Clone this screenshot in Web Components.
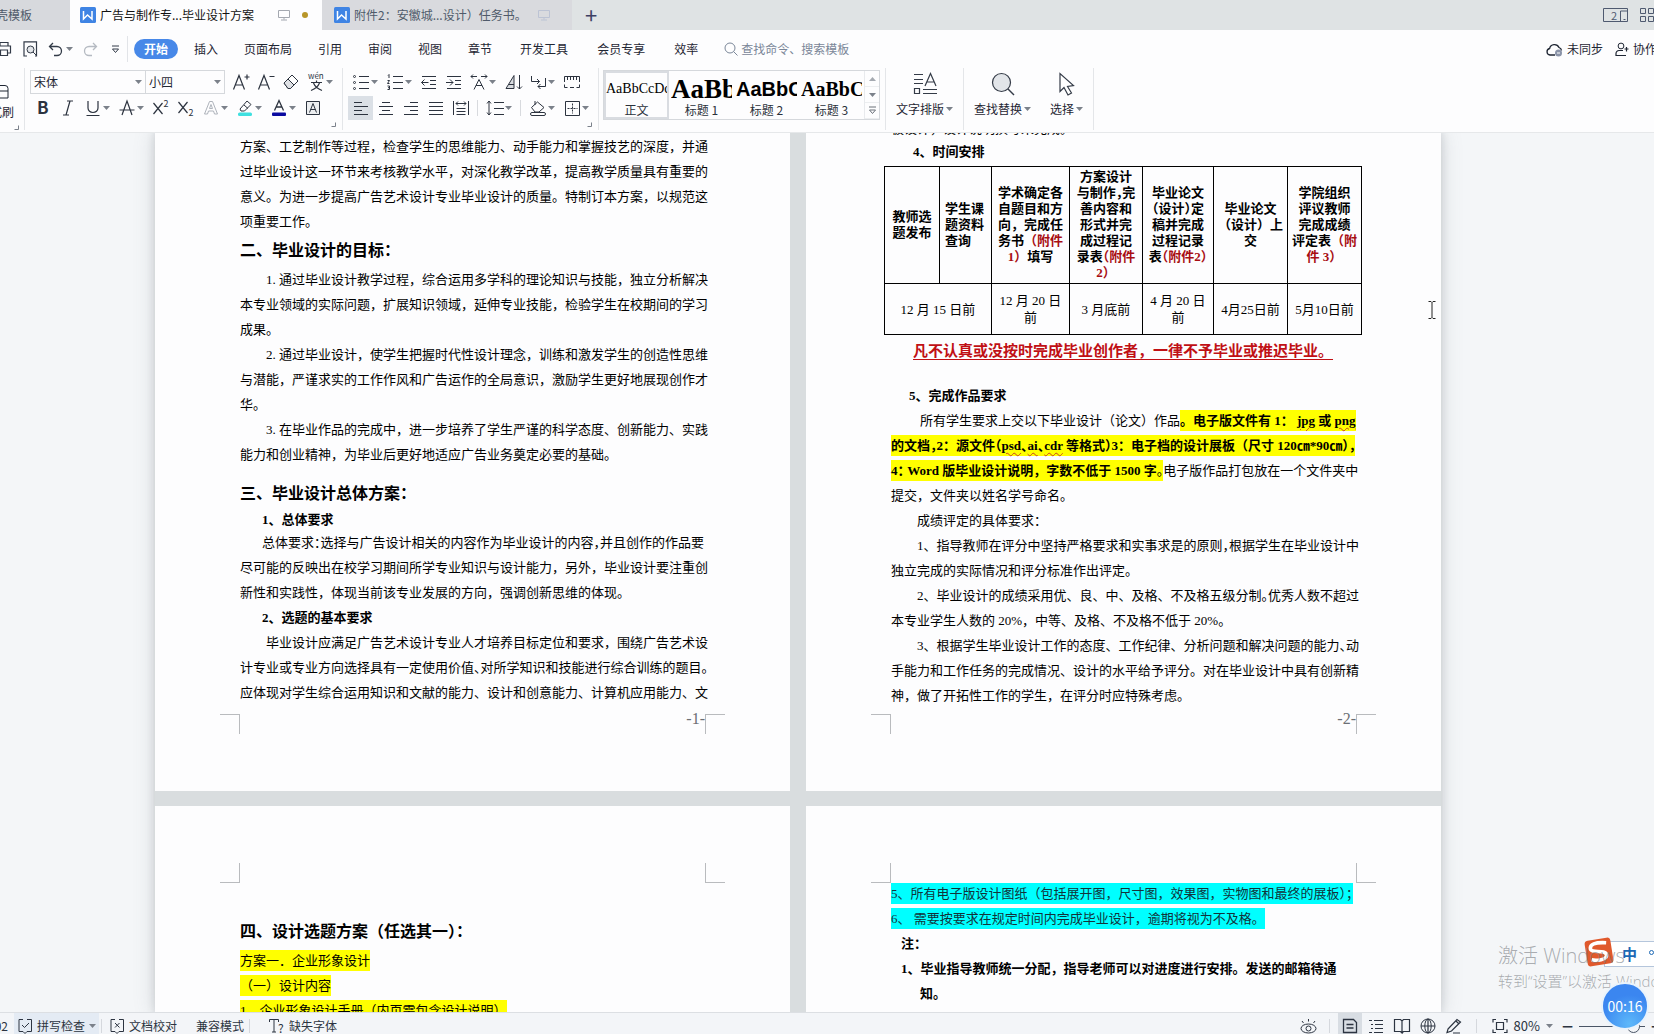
<!DOCTYPE html>
<html lang="zh-CN">
<head>
<meta charset="utf-8">
<title>毕业设计方案</title>
<style>
html,body{margin:0;height:100%;overflow:hidden}
body{font:12px/18px "Noto Sans CJK SC",sans-serif;color:#1f2633;background:#fdfdfe}
</style>
</head>
<body>
<writer-app></writer-app>
<script>
const define = (name, css, html, setup) => {
  const tpl = document.createElement('template');
  tpl.innerHTML = `<style>*{box-sizing:border-box}button,input,select{font:inherit;color:inherit;margin:0;padding:0;border:0;background:none;outline:0}a{color:inherit;text-decoration:none}${css}</style>${html}`;
  customElements.define(name, class extends HTMLElement {
    connectedCallback() {
      if (this.shadowRoot) return;
      this.attachShadow({mode: 'open'}).append(tpl.content.cloneNode(true));
      if (setup) setup(this, this.shadowRoot);
    }
  });
};

/* ---------- icons ---------- */
const T = (x, y, s, t, extra = '') => `<text x="${x}" y="${y}" font-size="${s}" fill="currentColor" stroke="none" ${extra}>${t}</text>`;
const ICONS = {
  writer: [16, 16, '<rect width="16" height="16" rx="1.5" fill="#3f84e4" stroke="none"/><path d="M3.5 4v8l4-4 4.500 4V4" stroke="#fff" stroke-width="1.500"/>'],
  monitor: [12, 12, '<path d="M.5 1.500h11v7H.5zM6 8.500v2M3 11h6"/>'],
  screens: [25, 15, '<path d="M.5.5h24v13H.5zM17.500 13V3h6.500M20.500 11.500h2"/>' + T(8, 11.5, 11, '2')],
  grid: [18, 15, '<path d="M.5.5h5v5h-5zM8.500.5h5v5h-5zM.5 8.500h5v5h-5zM8.500 8.500h5v5h-5z"/>'],
  printer: [16, 16, '<path d="M4 5V1.500h8V5M4 12H1.500V5h13v7H12M4.500 9h7v5.500h-7z" stroke-width="1.200"/>'],
  preview: [16, 16, '<path d="M5 15H2V.8h12.500V15H13" stroke-width="1.200"/><circle cx="8.500" cy="8.500" r="3.500" fill="#e2e5e9"/><path d="M11 11l4 4"/>'],
  undo: [15, 15, '<path d="M5 1L1.500 4.500 5 8M1.500 4.500H9a4.500 4.500 0 010 9H6" stroke-width="1.300"/>'],
  redo: [15, 15, '<path d="M10 1l3.500 3.500L10 8M13.500 4.500H6a4.500 4.500 0 000 9h3" stroke-width="1.300"/>'],
  more: [9, 9, '<path d="M1 1h7M1.500 4l3 3.500 3-3.500z"/>'],
  search: [14, 14, '<circle cx="6" cy="6" r="5"/><path d="M9.500 9.500l4 4"/>'],
  cloud: [17, 15, '<path d="M9 13H4a3.300 3.300 0 01-.4-6.500A5 5 0 0113 5.500a3.500 3.500 0 012.500 3" stroke-width="1.300"/><circle cx="12.500" cy="11" r="3.500" fill="#8a93a8" stroke="none"/><path d="M11 11h3" stroke="#fff"/>'],
  person: [14, 15, '<circle cx="6" cy="4" r="2.900"/><path d="M8 8.500H4a3 3 0 00-3 3v2h10M9.500 7h4M11.500 5v4.500" stroke-width="1.200"/>'],
  brush: [10, 20, '<path d="M-4 5.500h10q3 0 3 3V18H-4M-2 11h11"/>'],
  grow: [18, 18, '<path d="M1.500 16.500L7 2.500l5.500 14M3.500 12h7M12.500 4h5M15 1.500v5" stroke-width="1.200"/>'],
  shrink: [18, 18, '<path d="M1.500 16.500L7 2.500l5.500 14M3.500 12h7M12.500 3.500h5" stroke-width="1.200"/>'],
  eraser: [18, 18, '<path d="M2 10l8-8 6 6-7.500 7.500H6z" fill="#fff"/><path d="M6 6l6 6-3.500 3.500H6L2 10z" fill="#dfe1e5"/>'],
  wen: [18, 18, T(1, 6, 8, 'wén') + '<path d="M4 9.500h11M9.500 7.500v2M12.500 10Q10.500 15 4 17.500M6.500 10Q8.500 15 15 17.500" stroke-width="1.200"/>'],
  bold: [18, 18, T(3, 15, 17, 'B', 'font-weight="700" font-family="Noto Sans CJK SC"')],
  italic: [18, 18, '<path d="M8 2h6M4 16h6M11 2L7 16" stroke-width="1.200"/>'],
  under: [18, 18, '<path d="M4 2v7a5 4.500 0 0010 0V2M2.500 16.500h13" stroke-width="1.200"/>'],
  strike: [18, 18, '<path d="M4 16l5-14 5 14M1.500 11h15" stroke-width="1.200"/>'],
  sup: [18, 18, '<path d="M1.500 4l9 11M10.500 4l-9 11" stroke-width="1.200"/>' + T(11.5, 8, 9, '2')],
  sub: [18, 18, '<path d="M1.500 3l9 11M10.500 3l-9 11" stroke-width="1.200"/>' + T(11.5, 17, 9, '2')],
  fx: [18, 18, '<path d="M2.500 15L7.500 2.500h3L15.500 15h-3l-1-3h-5l-1 3zM7.500 9.500h3L9 5.500z" stroke="#aeb3bb"/>'],
  marker: [18, 18, '<path d="M4 10l7-8 4 3.500L8.500 12H5zM8 6l4 3.500"/><rect x="2" y="13.500" width="14" height="3.500" rx="1.500" fill="#3fe0e0" stroke="none"/>'],
  color: [18, 18, '<path d="M4.500 11.500L9 1.500l4.500 10M6 8h6" stroke-width="1.300"/><rect x="2" y="13.500" width="14" height="3.500" rx="1" fill="#0a0aa0" stroke="none"/>'],
  boxed: [18, 18, '<path d="M2.500 2.500h13v13h-13z" fill="#eceef0"/><path d="M5.500 13.500L9 4.500l3.500 9M6.500 10.500h5"/>'],
  bullets: [18, 18, '<path d="M7 3.500h10M7 9.500h10M7 15.500h10"/><circle cx="2.500" cy="3.500" r="1"/><circle cx="2.500" cy="9.500" r="1"/><circle cx="2.500" cy="15.500" r="1"/>'],
  numbers: [18, 18, '<path d="M7 3.500h10M7 9.500h10M7 15.500h10M2 2.500l1-1V5M1.500 7.500h2L1.500 10.500h2M1.500 13h2v3.500h-2M2 14.700h1.500"/>'],
  outdent: [18, 18, '<path d="M2 3.500h14M10 7.500h6M10 11.500h6M2 15.500h14M1.500 9.500h7M4.500 6.500l-3 3 3 3"/>'],
  indent: [18, 18, '<path d="M2 3.500h14M10 7.500h6M10 11.500h6M2 15.500h14M1 9.500h7M5 6.500l3 3-3 3"/>'],
  spread: [18, 18, '<path d="M4 16.500L9 6.500l5 10M6 12.500h6M1 3.500h6M3 1.500l-2 2 2 2M11 3.500h6M15 1.500l2 2-2 2"/>'],
  sort: [18, 18, '<path d="M2 15.500L10 2.500v13z" fill="#d9dce0"/><path d="M5 11.500h5M15.500 2v14M13 13.500l2.500 2.500 2.500-2.500"/>'],
  ret: [18, 18, '<path d="M2.500 3v5.500h8M8 6l2.500 2.500L8 11M16.500 5v8.500H9M11.500 11L9 13.500l2.500 2.500"/>'],
  ruler: [18, 18, '<path d="M1.500 9V3.500h15V9M4.500 3.500V7M7.500 3.500V7M10.500 3.500V7M13.500 3.500V7M1.500 11.500v3h3M7 14.500h4M13.500 14.500h3v-3"/>'],
  left: [18, 18, '<path d="M2 3.500h8M2 7.500h14M2 11.500h8M2 15.500h14" stroke-width="1.200"/>'],
  center: [18, 18, '<path d="M5 3.500h8M2 7.500h14M5 11.500h8M2 15.500h14"/>'],
  right: [18, 18, '<path d="M8 3.500h8M2 7.500h14M8 11.500h8M2 15.500h14"/>'],
  justify: [18, 18, '<path d="M2 3.500h14M2 7.500h14M2 11.500h14M2 15.500h14"/>'],
  distribute: [18, 18, '<path d="M1.500 2v14M16.500 2v14M4 4.500h10M6 2.500l-2 2 2 2M12 2.500l2 2-2 2M4.500 9.500h9M4.500 15.500h9M4.500 12.500h9"/>'],
  spacing: [18, 18, '<path d="M8 3.500h10M8 9.500h10M8 15.500h10M3 2v14M1 4.500l2-2.500 2 2.500M1 13.500L3 16l2-2.500"/>'],
  bucket: [18, 18, '<path d="M2.500 8.500L8.500 3l6.500 5.500L10 13H6zM6 2v4"/><rect x="1.500" y="13.500" width="15" height="3" rx="1.500" fill="#fff"/>'],
  borders: [18, 18, '<path d="M2.500 2.500h14v14h-14z"/><path d="M9.500 4.500v10M4.500 9.500h10" stroke-dasharray="2 1"/>'],
  typeset: [24, 24, '<path d="M1 2.500h9M1 7.500h9M1 11.500h9M1.500 16.500h5v5h-5zM10 17.500h14M10 21.500h14M12 14l5.500-12.500L23 14M14 10h7" stroke-width="1.200"/>'],
  find: [24, 24, '<circle cx="10.500" cy="10.500" r="9" fill="#e2e5e9" stroke-width="1.200"/><path d="M17 17l6 6" stroke-width="1.400"/>'],
  arrow: [24, 24, '<path d="M5 1.500v18l4-4 4 7.500 3.500-2-4-6.500 6-1z" fill="#fff" stroke-width="1.200"/>'],
  check: [16, 16, '<path d="M6 1.500H2v12h4l2 2 2-2h4.500v-12H10" /><path d="M5 7l2.500 2.500L12 5"/>'],
  proof: [16, 16, '<path d="M6 1.500H2v12h4l2 2 2-2h4.500v-12H10M6 5l4.500 4.500M10.500 5L6 9.500"/>'],
  tq: [16, 16, '<path d="M.5 4V1.500h9V4M5 1.500v12.500M3 14h4" />' + T(9, 15, 12, '?')],
  eye: [17, 17, '<ellipse cx="8.500" cy="10.500" rx="7.500" ry="4.500"/><circle cx="8.500" cy="10.500" r="2.500"/><path d="M8.500 3.500V1M3.500 5L2 3M13.500 5L15 3"/>'],
  page: [16, 16, '<path d="M1.500 1.500h10l3 3v10h-13zM4.500 6.500h7M4.500 10h7" stroke-width="1.300"/>'],
  list: [16, 16, '<path d="M1 2.500h3M6 2.500h9M3 6.500h2M7 6.500h8M3 10.500h2M7 10.500h8M1 14.500h3M6 14.500h9"/>'],
  book: [18, 16, '<path d="M9 3v12l-1.500-1.500H1.500v-12h6L9 3l1.500-1.500h6v12h-6L9 15" stroke-width="1.200"/>'],
  globe: [16, 16, '<circle cx="8" cy="8" r="7"/><ellipse cx="8" cy="8" rx="3.200" ry="7"/><path d="M1 8h14M8 1v14" stroke-width="1.200"/>'],
  pen: [18, 16, '<path d="M3 11L12 1.500l3.500 2.500-9 9-4.500 1.500zM11 3l3 3M8 15h7" stroke-width="1.200"/>'],
  full: [16, 16, '<path d="M1 4.500V1.500h3M12 1.500h3v3M15 11.500v3h-3M4 14.500H1v-3M4.500 4.500h7v7h-7z" stroke-width="1.200"/>'],
  launch: [5, 5, '<path d="M.5 4.500h4v-4"/>'],
  down: [7, 4, '<path d="M0 0h7L3.500 4z" fill="#7b818a" stroke="none"/>'],
  up: [7, 4, '<path d="M0 4h7L3.500 0z" fill="#a4a9b0" stroke="none"/>'],
  ibeam: [8, 18, '<path d="M.5.500h2.500l1 1 1-1H7.500M4 1.500v15M.5 17.500h2.500l1-1 1 1h2.500" stroke="#222"/>'],
  sogou: [32, 32, '<g transform="rotate(-9 16 16)"><rect x="3" y="3" width="26" height="26" rx="3.500" fill="#e0592c" stroke="none"/><path d="M24.500 8Q8 4.500 8 11.500c0 5 15 2.500 15 8.500 0 5-11 4.500-15.500 2.500" stroke="#fff" stroke-width="3.600"/></g>']
};
define('ui-icon', ':host{display:inline-flex;flex:none}svg{display:block;overflow:visible}', '', (el, root) => {
  const [w, h, body] = ICONS[el.getAttribute('name')];
  const box = document.createElement('div');
  box.innerHTML = `<svg width="${w}" height="${h}" viewBox="0 0 ${w} ${h}" fill="none" stroke="currentColor" stroke-width="1" aria-hidden="true">${body}</svg>`;
  root.append(box.firstChild);
});

/* ---------- tabs ---------- */
define('doc-tab', `
:host{display:flex;flex:none;width:250px;height:30px;background:#d9dade;color:#4f5a6a}
:host([active]){background:#fdfdfe;color:#111;width:252px}
:host([home]){width:70px;background:#d7d9dd}
a{display:flex;flex:1;align-items:center;gap:4px;padding-left:12px;min-width:0}
:host([active]) a{padding-left:10px}
.m{display:flex;color:#bcc3d4;margin-left:7px}
:host([active]) .m{margin-left:20px;color:#a4a8b0}
i{width:6px;height:6px;border-radius:3px;background:#b8962a;margin-left:8px}
:host([home]) a{padding:0;flex:none;width:32px;justify-content:flex-end;overflow:hidden;white-space:nowrap}
:host([home]) .x,:host(:not([active])) i{display:none}`,
`<a href="#"><ui-icon class="x" name="writer"></ui-icon><slot></slot><span class="m x"><ui-icon name="monitor"></ui-icon></span><i></i></a>`);

define('tab-bar', `
:host{display:flex;height:30px;background:#dfe3e4;overflow:hidden;color:#3d4663}
.new{width:38px;font-size:22px;line-height:26px;height:28px;color:#3d3f63}
.end{margin-left:auto;display:flex;align-items:center;gap:12px;margin-right:-4px;color:#4f5a70}
.end button{display:flex}`,
`<doc-tab home>稻壳模板</doc-tab><doc-tab active>广告与制作专...毕业设计方案</doc-tab><doc-tab>附件2：安徽城...设计）任务书。</doc-tab>
<button class="new" aria-label="新建标签">+</button>
<div class="end"><button aria-label="窗口"><ui-icon name="screens"></ui-icon></button><button aria-label="应用"><ui-icon name="grid"></ui-icon></button></div>`);

/* ---------- menu ---------- */
define('menu-bar', `
:host{display:flex;align-items:center;height:38px;overflow:hidden;white-space:nowrap}
button{display:flex;align-items:center}
.quick{display:flex;align-items:center;width:128px;height:26px;border-right:1px solid #e2e4e8;color:#333b48;gap:10px;flex:none}
.quick button:first-child{margin-left:-4px}
.quick .u{gap:3px}.dim{color:#b5bac2}
.quick .l{margin-left:3px}
nav{display:flex;align-items:center;gap:26px;flex:none}
nav.b{gap:29px;margin-left:28px}
.on{height:20px;line-height:20px;border-radius:10px;background:#4788e8;color:#fff;font-weight:700;padding:0 10px;margin:0 -10px 0 6px}
label{display:flex;align-items:center;gap:3px;margin-left:26px;color:#7a8698}
input{width:140px;line-height:18px}input::placeholder{color:#7a8698;opacity:1}
.end{margin-left:auto;display:flex;gap:12px;margin-right:-3px}
.end button{gap:4px}`,
`<div class="quick"><button aria-label="打印"><ui-icon name="printer"></ui-icon></button><button aria-label="打印预览"><ui-icon name="preview"></ui-icon></button><button class="u" aria-label="撤销"><ui-icon name="undo"></ui-icon><ui-icon name="down"></ui-icon></button><button class="dim" aria-label="恢复"><ui-icon name="redo"></ui-icon></button><button class="l" aria-label="更多"><ui-icon name="more"></ui-icon></button></div>
<nav><a class="on" href="#">开始</a><a href="#">插入</a><a href="#">页面布局</a><a href="#">引用</a><a href="#">审阅</a><a href="#">视图</a><a href="#">章节</a></nav>
<nav class="b"><a href="#">开发工具</a><a href="#">会员专享</a><a href="#">效率</a></nav>
<label><ui-icon name="search"></ui-icon><input placeholder="查找命令、搜索模板" aria-label="查找命令"></label>
<div class="end"><button><ui-icon name="cloud"></ui-icon>未同步</button><button><ui-icon name="person"></ui-icon>协作</button></div>`);

/* ---------- ribbon ---------- */
define('ribbon-tool', `
:host{display:flex;flex:none;width:25px;height:24px}
:host([caret]){width:34px}
:host([on]) button{background:#dbe0e6}
button{display:flex;align-items:center;width:100%;padding-left:4px;color:#2c333f}
.s{display:flex}
.c{margin-left:1px;display:none}
:host([caret]) .c{display:flex}`,
`<button><span class="s"></span><ui-icon class="c" name="down"></ui-icon></button>`,
(el, root) => {
  const icon = document.createElement('ui-icon');
  icon.setAttribute('name', el.getAttribute('icon'));
  root.querySelector('.s').append(icon);
  root.querySelector('button').setAttribute('aria-label', el.getAttribute('icon'));
});

define('ribbon-group', `
:host{display:flex;flex:none;height:62px;border-right:1px solid #e4e6e9}
.rows{display:flex;flex-direction:column;gap:2px;padding-top:2px}
::slotted(div){display:flex;height:24px;align-items:center}
.l{align-self:flex-end;margin:0 6px 3px -6px;color:#7b818b;display:none}
:host([launch]) .l{display:flex}`,
`<div class="rows"><slot></slot></div><ui-icon class="l" name="launch"></ui-icon>`);

define('style-card', `
:host{display:block;width:65px;overflow:hidden;text-align:center;flex:none}
:host([on]){box-shadow:inset 0 0 0 2px #d9dce1}
b{display:block;height:28px;margin:2px 2px 0;overflow:hidden;white-space:nowrap;text-align:left;color:#000;line-height:30px;font-family:"Liberation Serif",serif}
:host([kind="0"]) b{font-size:14px;font-weight:400}
:host([kind="1"]) b{font-size:27px}
:host([kind="2"]) b{font-size:20px;font-family:"Liberation Sans",sans-serif}
:host([kind="3"]) b{font-size:20px}
button{display:block;width:100%;height:48px}
span{display:block;line-height:16px;color:#2b313b}`,
`<button><b></b><span><slot></slot></span></button>`,
(el, root) => { root.querySelector('b').textContent = ['AaBbCcDd', 'AaBb', 'AaBbC', 'AaBbC'][el.getAttribute('kind')]; });

define('big-tool', `
:host{display:block;flex:none}
button{display:flex;flex-direction:column;align-items:center;gap:4px;padding:4px 10px 0 10px;color:#343b47;height:62px}
span{display:flex;align-items:center;gap:2px;line-height:18px;color:#1f2633}
.i{display:flex;height:24px}`,
`<button><div class="i"></div><span><slot></slot><ui-icon name="down"></ui-icon></span></button>`,
(el, root) => {
  const icon = document.createElement('ui-icon');
  icon.setAttribute('name', el.getAttribute('icon'));
  root.querySelector('.i').append(icon);
});

const tools = s => s.split(' ').map(n => n === '|' ? '<i class="sep"></i>' :
  `<ribbon-tool icon="${n.replace(/[+*]/g, '')}"${n.includes('+') ? ' caret' : ''}${n.includes('*') ? ' on' : ''}></ribbon-tool>`).join('');
define('ribbon-bar', `
:host{display:flex;height:64px;overflow:hidden;white-space:nowrap}
.brush{width:25px;height:62px;border-right:1px solid #e4e6e9;flex:none;display:flex;flex-direction:column;gap:4px;padding-top:12px}
.brush button{display:flex;justify-content:flex-end;width:14px;overflow:hidden;line-height:18px}
.brush .pic{padding-right:7px;width:16px}
.brush ui-icon.l{margin:0 0 0 14px;color:#7b818b}
.font{padding-left:5px}.para{padding-left:5px}
.sel{display:flex;align-items:center;height:24px;border:1px solid #d5d8dc;width:116px;padding-right:3px}
.sel+.sel{width:79px;border-left:0;margin-right:3px}
select{appearance:none;flex:1;min-width:0;padding-left:3px;color:#1f2633;height:22px;line-height:18px}
.sep{width:9px;height:16px;background:linear-gradient(90deg,transparent 4px,#d8dade 4px,#d8dade 5px,transparent 5px)}
.gal{display:flex;width:277px;height:50px;border:1px solid #d5d8dc;margin:2px 5px 0 4px}
.scroll{flex:1;display:flex;flex-direction:column;border-left:1px solid #e8eaed;color:#6a7079}
.scroll button{flex:1;display:flex;align-items:center;justify-content:center;border-bottom:1px solid #eceef0}
.g{height:62px;border-right:1px solid #e4e6e9;display:flex;flex:none}
.g.two big-tool+big-tool{margin-left:-1px}`,
`<div class="brush"><button class="pic" aria-label="格式刷"><ui-icon name="brush"></ui-icon></button><button>格式刷</button><ui-icon class="l" name="launch"></ui-icon></div>
<ribbon-group class="font" launch><div><span class="sel"><select aria-label="字体"><option>宋体</option></select><ui-icon name="down"></ui-icon></span><span class="sel"><select aria-label="字号"><option>小四</option></select><ui-icon name="down"></ui-icon></span>${tools('grow shrink eraser wen+')}</div>
<div>${tools('bold italic under+ strike+ sup sub fx+ marker+ color+ boxed')}</div></ribbon-group>
<ribbon-group class="para" launch><div>${tools('bullets+ numbers+ outdent indent spread+ sort ret+ ruler')}</div>
<div>${tools('left* center right justify distribute | spacing+ | bucket+ borders+')}</div></ribbon-group>
<div class="g"><div class="gal"><style-card kind="0" on>正文</style-card><style-card kind="1">标题 1</style-card><style-card kind="2">标题 2</style-card><style-card kind="3">标题 3</style-card>
<div class="scroll"><button aria-label="上"><ui-icon name="up"></ui-icon></button><button aria-label="下"><ui-icon name="down"></ui-icon></button><button aria-label="展开"><ui-icon name="more"></ui-icon></button></div></div></div>
<div class="g"><big-tool icon="typeset">文字排版</big-tool></div>
<div class="g two"><big-tool icon="find">查找替换</big-tool><big-tool icon="arrow">选择</big-tool></div>`);

/* ---------- paper ---------- */
define('doc-page', `
:host{display:flex;flex-direction:column;width:635px;flex:none;background:#fdfdfe;overflow:hidden}
:host([end]){justify-content:flex-end}
.body{display:block;flex:none;margin:0 79px 0 85px}
.marks{display:flex;flex:none;height:20px;padding-left:65px}
.marks i{width:20px;border:0 solid #b9bbbe;flex:none}
.marks span{width:465px;text-align:right;font:16px/10px "Liberation Serif",serif;color:#6c6f74}
.top{padding-top:57px;height:77px}
.top i{border-bottom-width:1px}
.bot{margin-bottom:57px}.bot i{border-top-width:1px}
i:first-child{border-right-width:1px}i:last-child{border-left-width:1px}
:host([end]) .top,:host(:not([end])) .bot{display:none}`,
`<div class="marks top"><i></i><span></span><i></i></div><div class="body"><slot></slot></div><div class="marks bot"><i></i><span class="no"></span><i></i></div>`,
(el, root) => { root.querySelector('.no').textContent = el.getAttribute('end') || ''; });

const PROSE = `
:host{display:block;font:13px/25px "Liberation Serif","Noto Sans CJK SC",serif;color:#000;white-space:nowrap}
p,h2,h3{margin:0;font-size:13px;line-height:25px}
h2{font-size:16px;line-height:33px;font-weight:700}
.i2{text-indent:26px}.i1{text-indent:22px}
s{text-decoration:none;font-feature-settings:"halt"}
mark{background:#ff0;color:#000;padding:3px 0}
u{text-decoration:underline wavy #c8401e 1px;text-underline-offset:2px}`;

define('page-one', PROSE + `:host{padding-bottom:9px}.gap{padding-top:10px}h3.t{line-height:20px}`, `
<p>方案、工艺制作等过程，检查学生的思维能力、动手能力和掌握技艺的深度，并通<br>过毕业设计这一环节来考核教学水平，对深化教学改革，提高教学质量具有重要的<br>意义。为进一步提高广告艺术设计专业毕业设计的质量。特制订本方案，以规范这<br>项重要工作。</p>
<h2>二、毕业设计的目标：</h2>
<p class="i2">1. 通过毕业设计教学过程，综合运用多学科的理论知识与技能，独立分析解决<br>本专业领域的实际问题，扩展知识领域，延伸专业技能，检验学生在校期间的学习<br>成果。</p>
<p class="i2">2. 通过毕业设计，使学生把握时代性设计理念，训练和激发学生的创造性思维<br>与潜能，严谨求实的工作作风和广告运作的全局意识，激励学生更好地展现创作才<br>华。</p>
<p class="i2">3. 在毕业作品的完成中，进一步培养了学生严谨的科学态度、创新能力、实践<br>能力和创业精神，为毕业后更好地适应广告业务奠定必要的基础。</p>
<h2 class="gap">三、毕业设计总体方案：</h2>
<h3 class="i1 t">1、总体要求</h3>
<p class="i1">总体要求<s>：</s>选择与广告设计相关的内容作为毕业设计的内容<s>，</s>并且创作的作品要<br>尽可能的反映出在校学习期间所学专业知识与设计能力，另外，毕业设计要注重创<br>新性和实践性，体现当前该专业发展的方向，强调创新思维的体现。</p>
<h3 class="i1">2、选题的基本要求</h3>
<p class="i2">毕业设计应满足广告艺术设计专业人才培养目标定位和要求，围绕广告艺术设<br>计专业或专业方向选择具有一定使用价值<s>、</s>对所学知识和技能进行综合训练的题目<s>。</s><br>应体现对学生综合运用知识和文献的能力、设计和创意能力、计算机应用能力、文</p>`);

define('time-table', `
:host{display:block;margin:4px 0 3px -7px;width:478px}
table{border-collapse:collapse;table-layout:fixed;width:478px;font:13px/16px "Liberation Serif","Noto Sans CJK SC",serif}
td,th{border:1px solid #000;padding:0;text-align:center;vertical-align:middle}
th{height:117px;line-height:16px}td{height:51px;line-height:17px}
th.l{text-align:left;padding-left:5px}
em{font-style:normal;color:#a80d12}s{text-decoration:none;font-feature-settings:"halt"}`, `
<table><colgroup><col style="width:55px"><col style="width:52px"><col style="width:78px"><col style="width:73px"><col style="width:71px"><col style="width:74px"><col></colgroup>
<tr><th>教师选<br>题发布</th><th class="l">学生课<br>题资料<br>查询</th><th>学术确定各<br>自题目和方<br>向，完成任<br>务书<em>（附件<br>1）</em>填写</th><th>方案设计<br>与制作<s>，</s>完<br>善内容和<br>形式并完<br>成过程记<br>录表<em><s>（</s>附件<br>2）</em></th><th>毕业论文<br><s>（</s>设计<s>）</s>定<br>稿并完成<br>过程记录<br>表<em><s>（</s>附件2<s>）</s></em></th><th>毕业论文<br>（设计）上<br>交</th><th>学院组织<br>评议教师<br>完成成绩<br>评定表<em>（附<br>件 3）</em></th></tr>
<tr><td colspan="2">12 月 15 日前</td><td>12 月 20 日<br>前</td><td>3 月底前</td><td>4 月 20 日<br>前</td><td>4月25日前</td><td>5月10日前</td></tr></table>`);

define('page-two', PROSE + `:host{padding-bottom:6px}
h3.t{line-height:21px}h3.f{text-indent:18px}.i3{text-indent:29px}
.red{font-size:15px;font-weight:700;color:#c01015;margin-bottom:19px;text-indent:22px;line-height:26px}
.red span{text-decoration:underline 1px;text-underline-offset:3px}`, `
<p>板设计，设计说明撰写未完成。</p>
<h3 class="i1 t">4、时间安排</h3>
<time-table></time-table>
<p class="red"><span>凡不认真或没按时完成毕业创作者，一律不予毕业或推迟毕业。</span></p>
<h3 class="f">5、完成作品要求</h3>
<p class="i3">所有学生要求上交以下毕业设计（论文）作品<mark><b>。电子版文件有 1： <u>jpg</u> 或 <u>png</u></b></mark><br><mark><b>的文档<s>，</s>2：源文件<s>（</s><u>psd</u><s>、</s><u>ai</u><s>、</s><u>cdr</u> 等格式<s>）</s>3：电子档的设计展板（尺寸 120㎝*90㎝<s>），</s></b></mark><br><mark><b>4<s>：</s> Word 版毕业设计说明，字数不低于 1500 字</b><s>。</s></mark>电子版作品打包放在一个文件夹中<br>提交，文件夹以姓名学号命名。</p>
<p class="i2">成绩评定的具体要求：</p>
<p class="i2">1、指导教师在评分中坚持严格要求和实事求是的原则<s>，</s>根据学生在毕业设计中<br>独立完成的实际情况和评分标准作出评定。</p>
<p class="i2">2、毕业设计的成绩采用优、良、中、及格、不及格五级分制<s>。</s>优秀人数不超过<br>本专业学生人数的 20%，中等、及格、不及格不低于 20%。</p>
<p class="i2">3、根据学生毕业设计工作的态度、工作纪律、分析问题和解决问题的能力<s>、</s>动<br>手能力和工作任务的完成情况、设计的水平给予评分。对在毕业设计中具有创新精<br>神，做了开拓性工作的学生，在评分时应特殊考虑。</p>`);

define('page-three', PROSE + `h2{margin-top:32px}`, `
<h2>四、设计选题方案（任选其一）：</h2>
<p><mark>方案一．企业形象设计</mark></p>
<p><mark>（一）设计内容</mark></p>
<p><mark>1、企业形象设计手册（内页需包含设计说明）</mark></p>`);

define('page-four', PROSE + `:host{margin-top:-2px}mark{background:#0ff;color:#12333a}.n{padding-left:10px}ol{margin:0;padding:0 0 0 29px;list-style:none;font-weight:700}li{text-indent:-19px}`, `
<p><mark>5、所有电子版设计图纸（包括展开图，尺寸图，效果图，实物图和最终的展板<s>）；</s></mark></p>
<p><mark>6、 需要按要求在规定时间内完成毕业设计，逾期将视为不及格。</mark></p>
<p class="n"><b>注：</b></p>
<ol><li>1、毕业指导教师统一分配，指导老师可以对进度进行安排。发送的邮箱待通<br></li></ol>
<ol>知。</ol>`);

define('doc-canvas', `
:host{display:grid;grid-template-columns:minmax(0,155fr) auto minmax(0,213fr);overflow:hidden;background:#f4f6f8;border-top:1px solid #e6e8ea;align-items:stretch}
.sheets{grid-column:2;display:grid;grid-template-columns:635px 635px;gap:15px 16px;grid-template-rows:658px 1fr;background:#d9dddf;box-shadow:0 0 6px 2px rgba(90,100,110,.12),0 0 20px rgba(90,100,110,.22);min-height:0;overflow:visible}
.sheets doc-page{min-height:0}`,
`<div class="sheets"><doc-page end="-1-"><page-one></page-one></doc-page><doc-page end="-2-"><page-two></page-two></doc-page><doc-page><page-three></page-three></doc-page><doc-page><page-four></page-four></doc-page></div>`);

/* ---------- status ---------- */
define('status-bar', `
:host{display:flex;height:22px;background:#f3f5f8;border-top:1px solid #dcdfe3;overflow:hidden;color:#2c3441;white-space:nowrap}
.in{display:flex;flex:1;height:26px;align-items:center;min-width:0}
button{display:flex;align-items:center;gap:4px;height:26px;flex:none}
.w{width:8px;display:flex;justify-content:flex-end;overflow:hidden;margin-right:6px}
.sp{background:#e4ebf4;padding:0 3px;gap:4px}
.bar{width:1px;height:14px;background:#d5d8dd;flex:none}
.b1{margin:0 7px 0 2px}.compat{margin:0 5px 0 19px}.miss{margin-left:19px}
.end{margin-left:auto;display:flex;align-items:center;flex:none;gap:2px;margin-right:-12px}
.end button{width:24px;justify-content:center}
.end .on{background:#d8dde3}
.end .z{width:auto;gap:6px;margin:0 3px 0 0;font-size:13px}
.end .m{width:19px;font-size:20px}
input{appearance:none;width:66px;height:14px;background:linear-gradient(#4a5566,#4a5566) center/100% 1px no-repeat;flex:none}
input::-webkit-slider-thumb{appearance:none;width:13px;height:13px;border-radius:7px;border:1px solid #4a5566;background:#f3f5f8}
.e1{margin:0 6px}.e2{margin:0 9px 0 8px}`,
`<div class="in"><span class="w">02</span><button class="sp"><ui-icon name="check"></ui-icon>拼写检查<ui-icon name="down"></ui-icon></button><i class="bar b1"></i><button><ui-icon name="proof"></ui-icon>文档校对</button><button class="compat">兼容模式</button><i class="bar"></i><button class="miss"><ui-icon name="tq"></ui-icon>缺失字体</button>
<div class="end"><button aria-label="护眼"><ui-icon name="eye"></ui-icon></button><i class="bar e1"></i><button class="on" aria-label="页面"><ui-icon name="page"></ui-icon></button><button aria-label="大纲"><ui-icon name="list"></ui-icon></button><button aria-label="阅读"><ui-icon name="book"></ui-icon></button><button aria-label="网页"><ui-icon name="globe"></ui-icon></button><button aria-label="写作"><ui-icon name="pen"></ui-icon></button><i class="bar e2"></i><button aria-label="全屏"><ui-icon name="full"></ui-icon></button><button class="z">80%<ui-icon name="down"></ui-icon></button><button class="m" aria-label="缩小">−</button><input type="range" min="0" max="100" value="90" aria-label="缩放"><button class="m" aria-label="放大">+</button></div></div>`);

/* ---------- desktop overlays ---------- */
define('desktop-overlay', `
:host{position:absolute;right:0;bottom:0;width:160px;height:100px;pointer-events:none;overflow:hidden;white-space:nowrap}
.ime{position:absolute;left:110px;top:7px;width:60px;height:26px;background:#fff;border:1px solid #b5c6dc;color:#1c68b4;font:700 15px/24px "Noto Sans CJK SC",sans-serif;padding-left:17px;display:flex;align-items:center;gap:12px}
.ime i{width:5px;height:5px;border:1px solid #1c68b4;border-radius:4px;margin-top:-4px}
.s{position:absolute;left:89px;top:2px}
.wm{position:absolute;left:4px;top:7px;color:rgba(120,124,130,.62);font:300 15px/20px "Open Sans","Noto Sans CJK SC",sans-serif}
.wm div{font-size:20px;line-height:30px}
.t{position:absolute;left:107px;top:48px;width:48px;height:48px;border-radius:24px;border:2px solid #e9f3fc;background:radial-gradient(circle at 60% 90%,#5cb8fa,#3b86f0 60%);color:#fff;font-size:14px;line-height:44px;text-align:center}`,
`<div class="ime">中<i></i></div><ui-icon class="s" name="sogou"></ui-icon><div class="wm"><div>激活 Windows</div>转到“设置”以激活 Windows</div><div class="t">00:16</div>`);

define('writer-app', `
:host{display:flex;flex-direction:column;height:100vh;position:relative;overflow:hidden}
tab-bar,menu-bar,ribbon-bar,status-bar{flex:none}
doc-canvas{flex:1;min-height:0}
.cur{position:absolute;left:1428px;top:301px}`,
`<tab-bar></tab-bar><menu-bar></menu-bar><ribbon-bar></ribbon-bar><doc-canvas></doc-canvas><status-bar></status-bar><desktop-overlay></desktop-overlay><ui-icon class="cur" name="ibeam"></ui-icon>`);
</script>
</body>
</html>
